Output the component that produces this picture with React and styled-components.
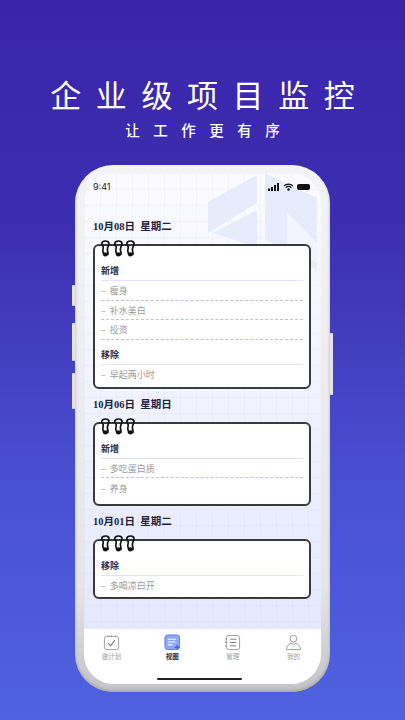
import React from 'react'
import styled, { createGlobalStyle } from 'styled-components'

const days = [
  {
    date: '10月08日  星期二',
    bottom: 2,
    groups: [
      { title: '新增', items: ['瘦身', '补水美白', '投资'] },
      { title: '移除', items: ['早起两小时'] },
    ],
  },
  {
    date: '10月06日  星期日',
    bottom: 5.5,
    groups: [{ title: '新增', items: ['多吃蛋白质', '养身'] }],
  },
  {
    date: '10月01日  星期二',
    bottom: 2,
    groups: [{ title: '移除', items: ['多喝凉白开'] }],
  },
]

function Spiral() {
  return (
    <SpiralSvg viewBox="0 0 11 17" width="11" height="17">
      <path d="M3.6 14C2.2 11.5 2.6 9.5 3.2 7.4 3.7 5.8 1.6 5.2 1.8 3.4 2 1.6 3.8 1 5.6 1c1.9 0 3.6 1 3.4 3-.2 1.9-1.6 3-1.6 5.4 0 2.2 1 3.4.6 5" fill="none" stroke="#111" strokeWidth="1.7" strokeLinecap="round" />
      <ellipse cx="5.4" cy="14.4" rx="2.5" ry="2.1" fill="#111" />
    </SpiralSvg>
  )
}

function Watermark() {
  return (
    <WatermarkSvg viewBox="0 0 114 100" width="114" height="100">
      <path d="M1 29 L50 2 V30 L1 60 Z" fill="#e8ebfb" />
      <path d="M6 60 L50 37 V74 Z" fill="#e8ebfb" />
      <path d="M58 0 L110 25 V97 L58 66 Z" fill="#e8ebfb" />
      <path d="M80 39 L110 70 V90 L80 72 Z" fill="#f3f5fe" />
    </WatermarkSvg>
  )
}

function PlanIcon() {
  return (
    <svg viewBox="0 0 18 18" width="17" height="17" fill="none" stroke="#9a9a9a" strokeWidth="1">
      <rect x="1.5" y="2.5" width="15" height="14" rx="2.5" />
      <path d="M5 1.5v2M9 1.5v2M13 1.5v2" />
      <path d="M5.5 9.5l2.5 3 4.5-6" stroke="#777" strokeWidth="1.1" />
    </svg>
  )
}

function ViewIcon() {
  return (
    <svg viewBox="0 0 18 18" width="17" height="17" fill="none">
      <rect x="1" y="1" width="15.5" height="15.5" rx="3" fill="#8ea6f5" stroke="#5c7eef" strokeWidth="1" />
      <path d="M4 5.5h9M4 8.5h8M4 11.5h5" stroke="#fff" strokeWidth="1.2" />
      <path d="M14 11.5v5M11.5 14h5" stroke="#3f63e6" strokeWidth="1.4" />
    </svg>
  )
}

function ManageIcon() {
  return (
    <svg viewBox="0 0 18 18" width="17" height="17" fill="none" stroke="#9a9a9a" strokeWidth="1">
      <rect x="2.5" y="1.5" width="14" height="15" rx="2.5" />
      <path d="M6.5 5.5h6.5M6.5 9h6.5M6.5 12.5h6.5" stroke="#777" />
      <path d="M1 5h2.5M1 9h2.5M1 13h2.5" />
    </svg>
  )
}

function MineIcon() {
  return (
    <svg viewBox="0 0 18 18" width="17" height="17" fill="none" stroke="#9a9a9a" strokeWidth="1">
      <circle cx="9" cy="5" r="3.6" />
      <path d="M1.5 16.5c0-3.6 3-6.2 4.8-6.6 1.6.9 3.8.9 5.4 0 1.8.4 4.8 3 4.8 6.6z" />
    </svg>
  )
}

const tabs = [
  { label: '做计划', icon: <PlanIcon /> },
  { label: '视图', icon: <ViewIcon />, active: true },
  { label: '管理', icon: <ManageIcon /> },
  { label: '我的', icon: <MineIcon /> },
]

export default function App() {
  return (
    <Page>
      <GlobalStyle />
      <Title>企业级项目监控</Title>
      <Subtitle>让工作更有序</Subtitle>
      <Phone>
        <SideButton $side="left" $top={120} $height={21} />
        <SideButton $side="left" $top={158} $height={38} />
        <SideButton $side="left" $top={208} $height={36} />
        <SideButton $side="right" $top={168} $height={62} />
        <Screen>
          <Watermark />
          <StatusBar>
            <span>9:41</span>
            <StatusIcons>
              <svg viewBox="0 0 12 8" width="12" height="8" fill="#111">
                <rect x="0" y="5.5" width="2" height="2.5" />
                <rect x="3" y="4" width="2" height="4" />
                <rect x="6" y="2" width="2" height="6" />
                <rect x="9" y="0" width="2" height="8" />
              </svg>
              <svg viewBox="0 0 12 9" width="11" height="8" fill="none" stroke="#111" strokeWidth="1.4">
                <path d="M1 3.2c2.8-2.6 7.2-2.6 10 0M2.8 5.2c1.8-1.6 4.6-1.6 6.4 0" />
                <circle cx="6" cy="7.4" r="0.7" fill="#111" />
              </svg>
              <Battery />
            </StatusIcons>
          </StatusBar>
          <Content>
            {days.map((day) => (
              <div key={day.date}>
                <DateLine>{day.date}</DateLine>
                <Card $bottom={day.bottom}>
                  <Spirals>
                    <Spiral />
                    <Spiral />
                    <Spiral />
                  </Spirals>
                  {day.groups.map((group) => (
                    <Group key={group.title}>
                      <GroupTitle>{group.title}</GroupTitle>
                      {group.items.map((item) => (
                        <Row key={item}>{'–  ' + item}</Row>
                      ))}
                    </Group>
                  ))}
                </Card>
              </div>
            ))}
          </Content>
          <TabBar>
            {tabs.map((tab) => (
              <Tab key={tab.label} $active={tab.active}>
                {tab.icon}
                <span>{tab.label}</span>
              </Tab>
            ))}
            <HomeBar />
          </TabBar>
        </Screen>
      </Phone>
    </Page>
  )
}

const GlobalStyle = createGlobalStyle`
  html, body {
    margin: 0;
    padding: 0;
  }
  body {
    font-family: "Inter", "Noto Sans CJK SC", sans-serif;
  }
`

const Page = styled.div`
  width: 405px;
  height: 720px;
  overflow: hidden;
  display: flex;
  flex-direction: column;
  align-items: center;
  background: linear-gradient(180deg, #3a24ab 0%, #3c2db0 30%, #4a52d3 70%, #4f62e0 100%);
`

const Title = styled.h1`
  margin: 71px 0 0;
  font: 400 31px/46px "Noto Sans CJK SC", sans-serif;
  letter-spacing: 14.6px;
  text-indent: 14.6px;
  color: #fff;
  white-space: nowrap;
`

const Subtitle = styled.div`
  margin-top: 2px;
  font: 500 14.5px/22px "Noto Sans CJK SC", sans-serif;
  letter-spacing: 13.5px;
  text-indent: 13.5px;
  color: #fff;
  white-space: nowrap;
`

const Phone = styled.div`
  position: relative;
  margin-top: 24px;
  width: 255px;
  height: 527px;
  flex: none;
  box-sizing: border-box;
  padding: 8px 9px 8px;
  border-radius: 38px;
  background: linear-gradient(180deg, #f4f4f6 0%, #e6e6e9 80%, #c4c4c8 100%);
  box-shadow: inset 0 -2px 3px #aaa;
`

const SideButton = styled.div`
  position: absolute;
  top: ${(p) => p.$top}px;
  ${(p) => p.$side}: -3px;
  width: 3px;
  height: ${(p) => p.$height}px;
  background: #e4e4ea;
  border-radius: 1px;
`

const Screen = styled.div`
  position: relative;
  height: 100%;
  display: flex;
  flex-direction: column;
  overflow: hidden;
  border-radius: 30px;
  background-color: #f2f4fe;
  background-image:
    linear-gradient(rgba(150, 160, 220, 0.07) 1px, transparent 1px),
    linear-gradient(90deg, rgba(150, 160, 220, 0.07) 1px, transparent 1px),
    linear-gradient(180deg, #fbfbff 0%, #e6e9fd 89%);
  background-size: 16px 16px, 16px 16px, 100% 100%;
`

const WatermarkSvg = styled.svg`
  position: absolute;
  top: 0;
  left: 123px;
`

const StatusBar = styled.div`
  position: relative;
  height: 27px;
  flex: none;
  display: flex;
  align-items: center;
  justify-content: space-between;
  padding: 0 11px 0 9px;
  font: 400 9px "Inter", sans-serif;
  color: #222;
`

const StatusIcons = styled.div`
  display: flex;
  align-items: center;
  gap: 3px;
`

const Battery = styled.div`
  width: 13px;
  height: 6px;
  border-radius: 2px;
  background: #111;
`

const Content = styled.div`
  position: relative;
  flex: 1;
  min-height: 0;
  padding: 11px 10px 0 9px;
`

const DateLine = styled.div`
  height: 29px;
  margin-bottom: 4px;
  display: flex;
  align-items: center;
  font: 700 10.5px "Liberation Serif", "Noto Sans CJK SC", serif;
  color: #23243a;
  white-space: pre;
`

const Card = styled.div`
  position: relative;
  padding: 15px 6px ${(p) => p.$bottom}px;
  border: 2px solid #3a3a3a;
  border-radius: 6px;
  background: #fff;
`

const Spirals = styled.div`
  position: absolute;
  top: -6px;
  left: 5px;
  display: flex;
  gap: 1.5px;
`

const SpiralSvg = styled.svg`
  display: block;
`

const Group = styled.div`
  & + & {
    margin-top: 5px;
  }
`

const GroupTitle = styled.div`
  box-sizing: border-box;
  height: 20px;
  display: flex;
  align-items: center;
  font: 700 9px "Noto Sans CJK SC", sans-serif;
  color: #2b2c40;
  border-bottom: 1.5px solid #dfe3fb;
`

const Row = styled.div`
  box-sizing: border-box;
  height: 19.7px;
  display: flex;
  align-items: center;
  white-space: pre;
  font: 400 9px "Noto Sans CJK SC", sans-serif;
  color: #9a9a9a;
  border-bottom: 1px dashed #b9bff2;

  ${Group}:last-child &:last-child {
    border-bottom: none;
  }
`

const TabBar = styled.div`
  position: relative;
  height: 55px;
  flex: none;
  display: grid;
  grid-template-columns: repeat(4, 60.7px);
  justify-content: center;
  align-items: start;
  padding-top: 5px;
  box-sizing: border-box;
  background: #fff;
`

const Tab = styled.div`
  display: flex;
  flex-direction: column;
  align-items: center;
  font: ${(p) => (p.$active ? 700 : 400)} 6.5px "Noto Sans CJK SC", sans-serif;
  color: ${(p) => (p.$active ? '#2b2c40' : '#a0a0a0')};
`

const HomeBar = styled.div`
  position: absolute;
  left: 73px;
  bottom: 4px;
  width: 85px;
  height: 2px;
  border-radius: 1px;
  background: #222;
`
